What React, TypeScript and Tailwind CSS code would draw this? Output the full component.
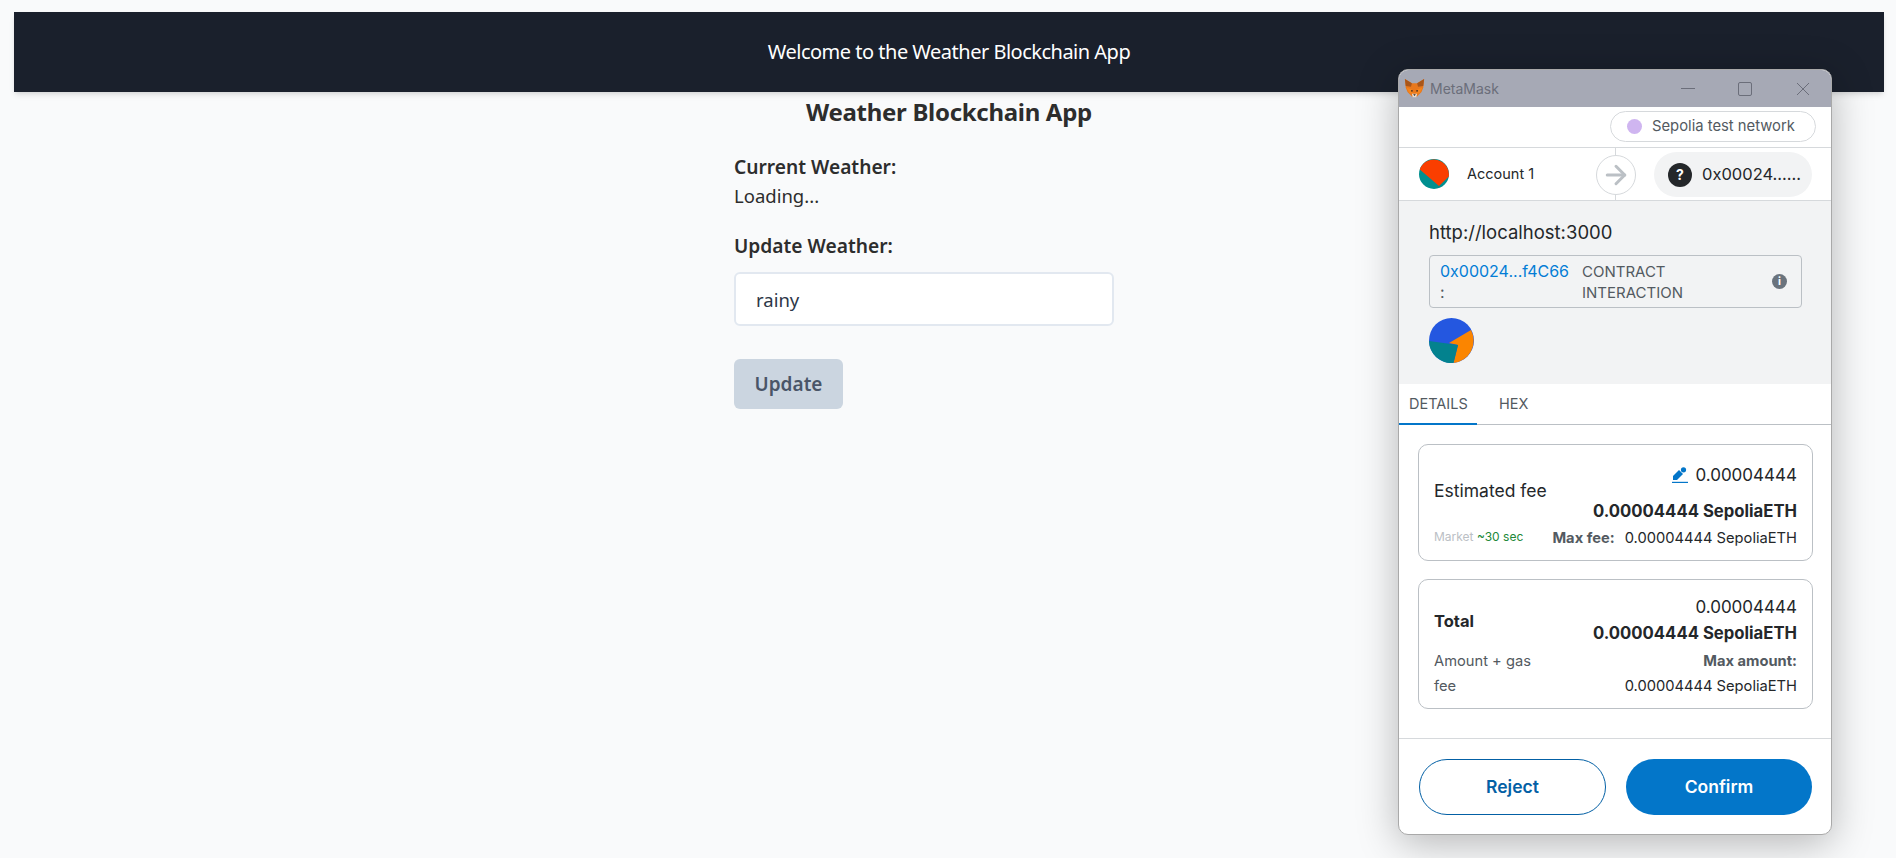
import { ArrowRight } from "lucide-react";

const sans = "font-['Noto_Sans','Open_Sans',sans-serif]";

function Fox() {
  return (
    <svg viewBox="0 0 24 24" className="w-[21px] h-[21px]">
      <polygon points="1,1 9,6 15,6 23,1 22,11 20,16 15,21 9,21 4,16 2,11" fill="#e8781c" />
      <polygon points="1,1 9,6 8,10 2,9" fill="#a8561a" />
      <polygon points="23,1 15,6 16,10 22,9" fill="#a8561a" />
      <polygon points="3,11 9,13 10,18 6,17" fill="#f6851b" />
      <polygon points="21,11 15,13 14,18 18,17" fill="#f6851b" />
      <polygon points="8,14 10,14 10,15.5 8,15.5" fill="#3a2a20" />
      <polygon points="14,14 16,14 16,15.5 14,15.5" fill="#3a2a20" />
      <polygon points="9,18 15,18 14,22 10,22" fill="#e8dccf" />
      <polygon points="10.5,18.5 13.5,18.5 12,20.5" fill="#2a2420" />
    </svg>
  );
}

function AccountIcon() {
  return (
    <svg viewBox="0 0 30 30" className="w-[30px] h-[30px]">
      <circle cx="15" cy="15" r="15" fill="#008f8f" />
      <path d="M0.8 10.5 A15 15 0 0 1 29.8 17.5 L20 27 Z" fill="#fa3e00" />
    </svg>
  );
}

function ContractIcon() {
  return (
    <svg viewBox="0 0 45 45" className="w-[45px] h-[45px]">
      <circle cx="22.5" cy="22.5" r="22.5" fill="#2457e0" />
      <path d="M42 12 L20 25 L29 27 L24.5 45 A22.5 22.5 0 0 0 42 12 Z" fill="#fb8500" />
      <path d="M0 23 L29 27 L24.5 45 A22.5 22.5 0 0 1 0 23 Z" fill="#03828e" />
    </svg>
  );
}

function Pencil() {
  return (
    <svg viewBox="0 0 16 16" className="w-4 h-4">
      <path d="M1 13 L1 9 L7 3 L11 7 L5 13 Z" fill="#0376c9" />
      <circle cx="11.5" cy="2.8" r="2.6" fill="#0376c9" />
      <rect x="0" y="14.8" width="16" height="1.2" fill="#0376c9" />
    </svg>
  );
}

export default function App() {
  return (
    <div className={`relative w-[1896px] h-[858px] overflow-hidden bg-[#f9fafb] pt-3 ${sans}`}>
      <header className="ml-[14px] w-[1870px] h-20 bg-[#1a202c] shadow-md flex items-center justify-center text-white text-[20px] tracking-[-0.5px] leading-[30px]">
        Welcome to the Weather Blockchain App
      </header>

      <main className="ml-[734px] text-[#2d2d2d]">
        <h1 className="w-[430px] mt-[2px] text-center text-2xl font-bold leading-9 tracking-[-0.3px]">Weather Blockchain App</h1>
        <div className="w-[380px]">
          <p className="mt-[23px] text-[19.2px] font-semibold leading-7">Current Weather:</p>
          <p className="text-[18.5px] leading-7 mt-[1px]">Loading...</p>
          <p className="mt-[22px] text-[19.2px] font-semibold leading-7">Update Weather:</p>
          <input
            readOnly
            value="rainy"
            className="mt-[12px] block w-[380px] h-[54px] px-5 bg-white border-2 border-[#e2e8f0] rounded-md text-[18.5px] text-[#2d3748]"
          />
          <button className="mt-[33px] block w-[109px] h-[50px] rounded-md bg-[#cbd5e0] text-[#4a5568] text-[19px] font-semibold">
            Update
          </button>
        </div>
      </main>

      {/* MetaMask popup */}
      <div className="absolute left-[1398px] top-[69px] w-[434px] h-[766px] bg-white border border-[#a9a9a9] rounded-[10px] overflow-hidden shadow-[0_8px_40px_rgba(0,0,0,0.28)] font-['Inter',sans-serif] text-[#24272a] flex flex-col">
        <div className="h-[37px] shrink-0 bg-[#a6a9b5] flex items-center pl-[5px] text-[#6b6e7a]">
          <Fox />
          <span className="ml-[5px] text-[14px]">MetaMask</span>
          <div className="ml-auto flex items-center">
            <span className="w-[14px] h-px bg-[#6b6e7a] mr-[43px]" />
            <span className="w-[14px] h-[14px] border border-[#6b6e7a] rounded-[2px] mr-[44px]" />
            <svg viewBox="0 0 14 14" className="w-[14px] h-[14px] mr-[21px]">
              <path d="M1 1 L13 13 M13 1 L1 13" stroke="#6b6e7a" strokeWidth="1" />
            </svg>
          </div>
        </div>

        <div className="h-[41px] shrink-0 border-b border-[#d6d9dc] flex items-center justify-end pr-[15px] pb-[2px]">
          <div className="w-[206px] h-[31px] border border-[#d6d9dc] rounded-full flex items-center pl-4 text-[14.8px] text-[#535a61]">
            <span className="w-[15px] h-[15px] rounded-full bg-[#cfb5f0] mr-[10px]" />
            Sepolia test network
          </div>
        </div>

        <div className="relative h-[53px] shrink-0 border-b border-[#d6d9dc] flex items-center pl-5 text-[14.5px]">
          <AccountIcon />
          <span className="ml-[18px]">Account 1</span>
          <div className="absolute left-[216px] top-0 bottom-0 w-px bg-[#d6d9dc]" />
          <div className="absolute left-[197px] top-[7px] w-10 h-10 rounded-full bg-white border border-[#d6d9dc] flex items-center justify-center">
            <ArrowRight className="w-[30px] h-[30px] text-[#bbc0c5]" strokeWidth={2.4} />
          </div>
          <div className="absolute left-[255px] top-[4px] w-[158px] h-[45px] rounded-full bg-[#f2f3f4] flex items-center pl-[14px] text-[16.5px]">
            <span className="w-6 h-6 rounded-full bg-[#24272a] text-white text-[14px] font-bold flex items-center justify-center mr-[10px]">?</span>
            0x00024......
          </div>
        </div>

        <div className="h-[183px] shrink-0 bg-[#f2f3f4] pt-[19px] px-[30px]">
          <div className="text-[18.5px] leading-6">http://localhost:3000</div>
          <div className="mt-[11px] w-[373px] h-[53px] border border-[#bbc0c5] rounded-[4px] flex items-center pl-[10px] text-[15px] leading-[21px]">
            <div className="w-[142px] text-[#037dd6] text-[16px]">
              0x00024...f4C66
              <div className="text-[#535a61]">:</div>
            </div>
            <div className="w-[170px] text-[#535a61]">CONTRACT INTERACTION</div>
            <span className="ml-[20px] w-[15px] h-[15px] rounded-full bg-[#6a737d] text-white text-[11px] font-bold flex items-center justify-center">i</span>
          </div>
          <div className="mt-[10px]">
            <ContractIcon />
          </div>
        </div>

        <div className="h-[41px] shrink-0 border-b border-[#bbc0c5] flex text-[14.5px] text-[#535a61]">
          <div className="w-[78px] border-b-2 border-[#0376c9] h-[41px] flex items-center pl-[10px]">DETAILS</div>
          <div className="ml-[22px] flex items-center">HEX</div>
        </div>

        <div className="flex-1 pl-[19px] pr-[18px] pt-[19px]">
          <div className="h-[117px] border border-[#bbc0c5] rounded-[10px] pl-[15px] pr-[15px] pt-[18px]">
            <div className="flex justify-between items-start">
              <span className="mt-[16px] text-[17.5px] leading-6">Estimated fee</span>
              <div className="text-right">
                <div className="flex items-center justify-end text-[17px] leading-6">
                  <Pencil />
                  <span className="ml-[7px]">0.00004444</span>
                </div>
                <div className="mt-[12px] text-[16.7px] font-bold leading-6">0.00004444 SepoliaETH</div>
              </div>
            </div>
            <div className="flex justify-between items-center mt-[2px] text-[14.7px] leading-[22px]">
              <div className="text-[12px]">
                <span className="text-[#bbc0c5]">Market</span> <span className="text-[#218838]">~30 sec</span>
              </div>
              <div className="mt-[2px]">
                <span className="font-bold text-[#535a61] mr-[6px]">Max fee:</span> 0.00004444 SepoliaETH
              </div>
            </div>
          </div>

          <div className="mt-[18px] h-[130px] border border-[#bbc0c5] rounded-[10px] pl-[15px] pr-[15px] pt-[15px]">
            <div className="flex justify-between items-start">
              <span className="mt-[14px] text-[16.5px] font-bold leading-6">Total</span>
              <div className="text-right">
                <div className="text-[17px] leading-6">0.00004444</div>
                <div className="mt-[2px] text-[16.7px] font-bold leading-6">0.00004444 SepoliaETH</div>
              </div>
            </div>
            <div className="flex justify-between mt-1 text-[14.7px] leading-[25px]">
              <div className="w-[110px] text-[#535a61]">Amount + gas fee</div>
              <div className="text-right">
                <div className="font-bold text-[#535a61]">Max amount:</div>
                <div>0.00004444 SepoliaETH</div>
              </div>
            </div>
          </div>
        </div>

        <div className="h-[96px] shrink-0 border-t border-[#d6d9dc] flex gap-[20px] pl-[20px] pt-[20px]">
          <button className="w-[187px] h-[56px] rounded-full border border-[#0360a5] text-[#0360a5] text-[17.5px] font-semibold">Reject</button>
          <button className="w-[186px] h-[56px] rounded-full bg-[#0376c9] text-white text-[17.5px] font-semibold">Confirm</button>
        </div>
      </div>
    </div>
  );
}
